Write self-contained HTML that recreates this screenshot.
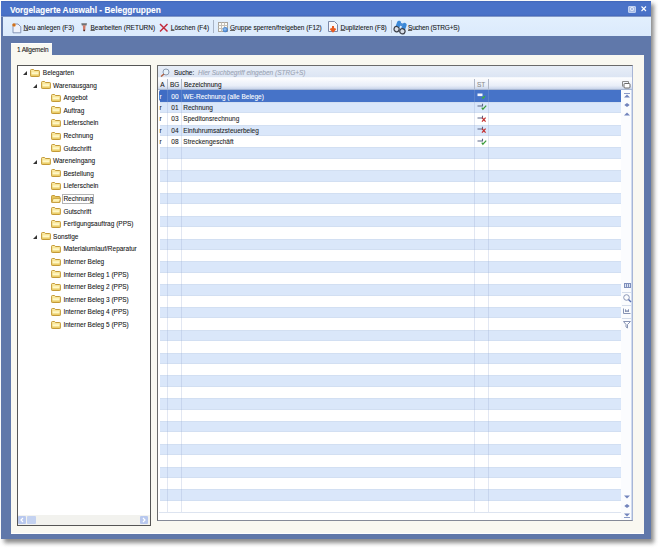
<!DOCTYPE html><html><head><meta charset="utf-8"><style>
*{margin:0;padding:0;box-sizing:border-box}
html,body{width:659px;height:548px;overflow:hidden;background:#fff;font-family:"Liberation Sans", sans-serif;}
.a{position:absolute}
.t{position:absolute;white-space:nowrap;font-size:6.5px;line-height:8px;color:#151515;-webkit-text-stroke-width:0.08px}
.f{position:absolute;width:9px;height:7px}
u{text-decoration:underline;text-decoration-color:#666;text-decoration-thickness:0.5px;text-underline-offset:0.4px}
</style></head><body>
<div class="a" style="left:4px;top:4px;width:650px;height:539px;background:#808080;filter:blur(2px);opacity:.9"></div>
<div class="a" style="left:1px;top:1px;width:650px;height:538px;background:#6078aa"></div>
<div class="a" style="left:1px;top:1px;width:650px;height:15px;background:linear-gradient(#4266b8,#4a72c8 12%,#4a72c8 88%,#4568bc)"></div>
<div class="a" style="left:1px;top:16px;width:650px;height:1px;background:#8298c8"></div>
<div class="t" style="left:10px;top:5.2px;font-size:8.4px;line-height:10px;font-weight:bold;color:#fff">Vorgelagerte Auswahl - Beleggruppen</div>
<div class="a" style="left:628px;top:5.5px;width:8px;height:7px;background:#a6bae6;border:1px solid #c0d0f0;border-radius:1px"></div>
<div class="a" style="left:630px;top:7px;width:4px;height:4px;border:1px solid #eef3fc;border-radius:1.5px"></div>
<svg class="a" style="left:640.5px;top:6px" width="6" height="6"><path d="M0.5 0.5L5 5M5 0.5L0.5 5" stroke="#fff" stroke-width="1.1"/></svg>
<div class="a" style="left:3px;top:17px;width:648px;height:19px;background:linear-gradient(#e2effd,#dbeafc)"></div>
<svg class="a" style="left:11.5px;top:22.5px" width="10" height="11"><path d="M1 1H6L8.8 3.8V9.8H1Z" fill="#eef2fb" stroke="#7a8cb0" stroke-width="0.9"/><circle cx="2" cy="2" r="1.8" fill="#e88a2a"/><circle cx="2" cy="2" r="0.7" fill="#a04010"/></svg>
<div class="t" style="left:23.5px;top:24px"><u>N</u>eu anlegen (F3)</div>
<svg class="a" style="left:81px;top:22px" width="7" height="10"><path d="M0.3 1.2H6L5.5 3.4H0.8Z" fill="#707274"/><path d="M1.8 3.2H4.6L4.2 8.6Q3.2 9.6 2.2 8.6Z" fill="#d07a66"/><path d="M2.3 7.8H4.1L3.8 9.2H2.6Z" fill="#402020"/></svg>
<div class="t" style="left:90.5px;top:24px"><u>B</u>earbeiten (RETURN)</div>
<svg class="a" style="left:159px;top:23px" width="10" height="10"><path d="M1 1L8.5 8.5M8.5 1L1 8.5" stroke="#c22a3c" stroke-width="1.45"/></svg>
<div class="t" style="left:170.8px;top:24px"><u>L</u>öschen (F4)</div>
<div class="a" style="left:213px;top:20px;width:1px;height:13px;background:#a8b4c6"></div>
<svg class="a" style="left:217px;top:22px" width="12" height="11"><defs><radialGradient id="bg1" cx="0.45" cy="0.45" r="0.6"><stop offset="0" stop-color="#9cc8f4"/><stop offset="1" stop-color="#2c6cc0"/></radialGradient></defs><rect x="1.5" y="0.5" width="9" height="9" fill="#fbfbf6" stroke="#a8a49c"/><path d="M4.5 0.5V9.5M7.5 0.5V9.5M1.5 3.5H10.5M1.5 6.5H10.5" stroke="#c4c0b8"/><circle cx="8.2" cy="7.6" r="2.6" fill="url(#bg1)"/></svg>
<div class="t" style="left:230px;top:24px"><u>G</u>ruppe sperren/freigeben (F12)</div>
<svg class="a" style="left:328px;top:21px" width="11" height="12"><path d="M0.5 0.5H6.5L9.5 3.5V10.5H0.5Z" fill="#f6f6fa" stroke="#7a88a8"/><path d="M5 5V10M2.5 7.5L5 10.2L7.5 7.5" stroke="#e85a20" stroke-width="2" fill="none"/></svg>
<div class="t" style="left:340.5px;top:24px"><u>D</u>uplizieren (F8)</div>
<div class="a" style="left:391px;top:20px;width:1px;height:13px;background:#b4bece"></div>
<svg class="a" style="left:393px;top:19.5px" width="15" height="15"><g transform="rotate(20 7.5 7.5)"><rect x="2.5" y="1.5" width="4" height="8" rx="2" fill="#3a88d8"/><rect x="8.5" y="1.5" width="4" height="8" rx="2" fill="#3a88d8"/><rect x="6" y="3" width="3" height="3" fill="#4a8ed8"/><circle cx="4.4" cy="10.4" r="2.6" fill="#d8dee8" stroke="#3a3e48" stroke-width="1.2"/><circle cx="10.6" cy="10.4" r="2.6" fill="#d8dee8" stroke="#3a3e48" stroke-width="1.2"/></g></svg>
<div class="t" style="left:408px;top:24px;letter-spacing:-0.2px"><u>S</u>uchen (STRG+S)</div>
<div class="a" style="left:11px;top:43px;width:41px;height:12px;background:#f9f8f1;border-top:1px solid #fff"></div>
<div class="t" style="left:17px;top:46px;letter-spacing:-0.2px">1 Allgemein</div>
<div class="a" style="left:11px;top:55px;width:633px;height:479px;background:#f9f8f1;border-bottom:1px solid #fff"></div>
<div class="a" style="left:17px;top:65px;width:134px;height:461px;background:#fff;border:1px solid #555"></div>
<svg class="a" style="left:23.0px;top:71.3px" width="4" height="4"><path d="M4 0V4H0Z" fill="#333"/></svg>
<svg class="f" style="left:30.3px;top:68.5px;width:10px;height:8px" width="10" height="8" viewBox="0 0 10 8"><defs><linearGradient id="fg" x1="0" y1="0" x2="0" y2="1"><stop offset="0" stop-color="#fff2b0"/><stop offset="1" stop-color="#e8c860"/></linearGradient></defs><path d="M0.6 1.2Q0.6 0.5 1.3 0.5H3.6L4.4 1.5H8.8Q9.4 1.5 9.4 2.2V6.9Q9.4 7.5 8.8 7.5H1.2Q0.6 7.5 0.6 6.9Z" fill="url(#fg)" stroke="#c49a38" stroke-width="1"/><rect x="1.6" y="3.3" width="6.8" height="2" fill="#fff8c8"/></svg>
<div class="t" style="left:42.8px;top:69.0px">Belegarten</div>
<svg class="a" style="left:33.2px;top:83.9px" width="4" height="4"><path d="M4 0V4H0Z" fill="#333"/></svg>
<svg class="f" style="left:40.5px;top:81.1px;width:10px;height:8px" width="10" height="8" viewBox="0 0 10 8"><defs><linearGradient id="fg" x1="0" y1="0" x2="0" y2="1"><stop offset="0" stop-color="#fff2b0"/><stop offset="1" stop-color="#e8c860"/></linearGradient></defs><path d="M0.6 1.2Q0.6 0.5 1.3 0.5H3.6L4.4 1.5H8.8Q9.4 1.5 9.4 2.2V6.9Q9.4 7.5 8.8 7.5H1.2Q0.6 7.5 0.6 6.9Z" fill="url(#fg)" stroke="#c49a38" stroke-width="1"/><rect x="1.6" y="3.3" width="6.8" height="2" fill="#fff8c8"/></svg>
<div class="t" style="left:53.1px;top:81.6px">Warenausgang</div>
<svg class="f" style="left:50.7px;top:93.7px;width:10px;height:8px" width="10" height="8" viewBox="0 0 10 8"><defs><linearGradient id="fg" x1="0" y1="0" x2="0" y2="1"><stop offset="0" stop-color="#fff2b0"/><stop offset="1" stop-color="#e8c860"/></linearGradient></defs><path d="M0.6 1.2Q0.6 0.5 1.3 0.5H3.6L4.4 1.5H8.8Q9.4 1.5 9.4 2.2V6.9Q9.4 7.5 8.8 7.5H1.2Q0.6 7.5 0.6 6.9Z" fill="url(#fg)" stroke="#c49a38" stroke-width="1"/><rect x="1.6" y="3.3" width="6.8" height="2" fill="#fff8c8"/></svg>
<div class="t" style="left:63.4px;top:94.2px">Angebot</div>
<svg class="f" style="left:50.7px;top:106.3px;width:10px;height:8px" width="10" height="8" viewBox="0 0 10 8"><defs><linearGradient id="fg" x1="0" y1="0" x2="0" y2="1"><stop offset="0" stop-color="#fff2b0"/><stop offset="1" stop-color="#e8c860"/></linearGradient></defs><path d="M0.6 1.2Q0.6 0.5 1.3 0.5H3.6L4.4 1.5H8.8Q9.4 1.5 9.4 2.2V6.9Q9.4 7.5 8.8 7.5H1.2Q0.6 7.5 0.6 6.9Z" fill="url(#fg)" stroke="#c49a38" stroke-width="1"/><rect x="1.6" y="3.3" width="6.8" height="2" fill="#fff8c8"/></svg>
<div class="t" style="left:63.4px;top:106.8px">Auftrag</div>
<svg class="f" style="left:50.7px;top:118.9px;width:10px;height:8px" width="10" height="8" viewBox="0 0 10 8"><defs><linearGradient id="fg" x1="0" y1="0" x2="0" y2="1"><stop offset="0" stop-color="#fff2b0"/><stop offset="1" stop-color="#e8c860"/></linearGradient></defs><path d="M0.6 1.2Q0.6 0.5 1.3 0.5H3.6L4.4 1.5H8.8Q9.4 1.5 9.4 2.2V6.9Q9.4 7.5 8.8 7.5H1.2Q0.6 7.5 0.6 6.9Z" fill="url(#fg)" stroke="#c49a38" stroke-width="1"/><rect x="1.6" y="3.3" width="6.8" height="2" fill="#fff8c8"/></svg>
<div class="t" style="left:63.4px;top:119.4px">Lieferschein</div>
<svg class="f" style="left:50.7px;top:131.5px;width:10px;height:8px" width="10" height="8" viewBox="0 0 10 8"><defs><linearGradient id="fg" x1="0" y1="0" x2="0" y2="1"><stop offset="0" stop-color="#fff2b0"/><stop offset="1" stop-color="#e8c860"/></linearGradient></defs><path d="M0.6 1.2Q0.6 0.5 1.3 0.5H3.6L4.4 1.5H8.8Q9.4 1.5 9.4 2.2V6.9Q9.4 7.5 8.8 7.5H1.2Q0.6 7.5 0.6 6.9Z" fill="url(#fg)" stroke="#c49a38" stroke-width="1"/><rect x="1.6" y="3.3" width="6.8" height="2" fill="#fff8c8"/></svg>
<div class="t" style="left:63.4px;top:132.0px">Rechnung</div>
<svg class="f" style="left:50.7px;top:144.1px;width:10px;height:8px" width="10" height="8" viewBox="0 0 10 8"><defs><linearGradient id="fg" x1="0" y1="0" x2="0" y2="1"><stop offset="0" stop-color="#fff2b0"/><stop offset="1" stop-color="#e8c860"/></linearGradient></defs><path d="M0.6 1.2Q0.6 0.5 1.3 0.5H3.6L4.4 1.5H8.8Q9.4 1.5 9.4 2.2V6.9Q9.4 7.5 8.8 7.5H1.2Q0.6 7.5 0.6 6.9Z" fill="url(#fg)" stroke="#c49a38" stroke-width="1"/><rect x="1.6" y="3.3" width="6.8" height="2" fill="#fff8c8"/></svg>
<div class="t" style="left:63.4px;top:144.6px">Gutschrift</div>
<svg class="a" style="left:33.2px;top:159.5px" width="4" height="4"><path d="M4 0V4H0Z" fill="#333"/></svg>
<svg class="f" style="left:40.5px;top:156.7px;width:10px;height:8px" width="10" height="8" viewBox="0 0 10 8"><defs><linearGradient id="fg" x1="0" y1="0" x2="0" y2="1"><stop offset="0" stop-color="#fff2b0"/><stop offset="1" stop-color="#e8c860"/></linearGradient></defs><path d="M0.6 1.2Q0.6 0.5 1.3 0.5H3.6L4.4 1.5H8.8Q9.4 1.5 9.4 2.2V6.9Q9.4 7.5 8.8 7.5H1.2Q0.6 7.5 0.6 6.9Z" fill="url(#fg)" stroke="#c49a38" stroke-width="1"/><rect x="1.6" y="3.3" width="6.8" height="2" fill="#fff8c8"/></svg>
<div class="t" style="left:53.1px;top:157.2px">Wareneingang</div>
<svg class="f" style="left:50.7px;top:169.3px;width:10px;height:8px" width="10" height="8" viewBox="0 0 10 8"><defs><linearGradient id="fg" x1="0" y1="0" x2="0" y2="1"><stop offset="0" stop-color="#fff2b0"/><stop offset="1" stop-color="#e8c860"/></linearGradient></defs><path d="M0.6 1.2Q0.6 0.5 1.3 0.5H3.6L4.4 1.5H8.8Q9.4 1.5 9.4 2.2V6.9Q9.4 7.5 8.8 7.5H1.2Q0.6 7.5 0.6 6.9Z" fill="url(#fg)" stroke="#c49a38" stroke-width="1"/><rect x="1.6" y="3.3" width="6.8" height="2" fill="#fff8c8"/></svg>
<div class="t" style="left:63.4px;top:169.8px">Bestellung</div>
<svg class="f" style="left:50.7px;top:181.9px;width:10px;height:8px" width="10" height="8" viewBox="0 0 10 8"><defs><linearGradient id="fg" x1="0" y1="0" x2="0" y2="1"><stop offset="0" stop-color="#fff2b0"/><stop offset="1" stop-color="#e8c860"/></linearGradient></defs><path d="M0.6 1.2Q0.6 0.5 1.3 0.5H3.6L4.4 1.5H8.8Q9.4 1.5 9.4 2.2V6.9Q9.4 7.5 8.8 7.5H1.2Q0.6 7.5 0.6 6.9Z" fill="url(#fg)" stroke="#c49a38" stroke-width="1"/><rect x="1.6" y="3.3" width="6.8" height="2" fill="#fff8c8"/></svg>
<div class="t" style="left:63.4px;top:182.4px">Lieferschein</div>
<svg class="f" style="left:50.7px;top:194.5px;width:10px;height:8px" width="10" height="8" viewBox="0 0 10 8"><path d="M0.6 1.2Q0.6 0.5 1.3 0.5H3.6L4.4 1.5H8.4Q9 1.5 9 2.2V6.9Q9 7.5 8.4 7.5H1.2Q0.6 7.5 0.6 6.9Z" fill="#e8c860" stroke="#c49a38" stroke-width="1"/><path d="M2.2 3.4H9.6L8.4 7.3H0.9Z" fill="#fff2b0" stroke="#c49a38" stroke-width="0.8"/></svg>
<div class="a" style="left:61.9px;top:194.3px;width:32.5px;height:9.5px;border:1px solid #b4b4b4"></div>
<div class="t" style="left:63.4px;top:195.0px">Rechnung</div>
<svg class="f" style="left:50.7px;top:207.1px;width:10px;height:8px" width="10" height="8" viewBox="0 0 10 8"><defs><linearGradient id="fg" x1="0" y1="0" x2="0" y2="1"><stop offset="0" stop-color="#fff2b0"/><stop offset="1" stop-color="#e8c860"/></linearGradient></defs><path d="M0.6 1.2Q0.6 0.5 1.3 0.5H3.6L4.4 1.5H8.8Q9.4 1.5 9.4 2.2V6.9Q9.4 7.5 8.8 7.5H1.2Q0.6 7.5 0.6 6.9Z" fill="url(#fg)" stroke="#c49a38" stroke-width="1"/><rect x="1.6" y="3.3" width="6.8" height="2" fill="#fff8c8"/></svg>
<div class="t" style="left:63.4px;top:207.6px">Gutschrift</div>
<svg class="f" style="left:50.7px;top:219.7px;width:10px;height:8px" width="10" height="8" viewBox="0 0 10 8"><defs><linearGradient id="fg" x1="0" y1="0" x2="0" y2="1"><stop offset="0" stop-color="#fff2b0"/><stop offset="1" stop-color="#e8c860"/></linearGradient></defs><path d="M0.6 1.2Q0.6 0.5 1.3 0.5H3.6L4.4 1.5H8.8Q9.4 1.5 9.4 2.2V6.9Q9.4 7.5 8.8 7.5H1.2Q0.6 7.5 0.6 6.9Z" fill="url(#fg)" stroke="#c49a38" stroke-width="1"/><rect x="1.6" y="3.3" width="6.8" height="2" fill="#fff8c8"/></svg>
<div class="t" style="left:63.4px;top:220.2px">Fertigungsauftrag (PPS)</div>
<svg class="a" style="left:33.2px;top:235.1px" width="4" height="4"><path d="M4 0V4H0Z" fill="#333"/></svg>
<svg class="f" style="left:40.5px;top:232.3px;width:10px;height:8px" width="10" height="8" viewBox="0 0 10 8"><defs><linearGradient id="fg" x1="0" y1="0" x2="0" y2="1"><stop offset="0" stop-color="#fff2b0"/><stop offset="1" stop-color="#e8c860"/></linearGradient></defs><path d="M0.6 1.2Q0.6 0.5 1.3 0.5H3.6L4.4 1.5H8.8Q9.4 1.5 9.4 2.2V6.9Q9.4 7.5 8.8 7.5H1.2Q0.6 7.5 0.6 6.9Z" fill="url(#fg)" stroke="#c49a38" stroke-width="1"/><rect x="1.6" y="3.3" width="6.8" height="2" fill="#fff8c8"/></svg>
<div class="t" style="left:53.1px;top:232.8px">Sonstige</div>
<svg class="f" style="left:50.7px;top:244.9px;width:10px;height:8px" width="10" height="8" viewBox="0 0 10 8"><defs><linearGradient id="fg" x1="0" y1="0" x2="0" y2="1"><stop offset="0" stop-color="#fff2b0"/><stop offset="1" stop-color="#e8c860"/></linearGradient></defs><path d="M0.6 1.2Q0.6 0.5 1.3 0.5H3.6L4.4 1.5H8.8Q9.4 1.5 9.4 2.2V6.9Q9.4 7.5 8.8 7.5H1.2Q0.6 7.5 0.6 6.9Z" fill="url(#fg)" stroke="#c49a38" stroke-width="1"/><rect x="1.6" y="3.3" width="6.8" height="2" fill="#fff8c8"/></svg>
<div class="t" style="left:63.4px;top:245.4px">Materialumlauf/Reparatur</div>
<svg class="f" style="left:50.7px;top:257.5px;width:10px;height:8px" width="10" height="8" viewBox="0 0 10 8"><defs><linearGradient id="fg" x1="0" y1="0" x2="0" y2="1"><stop offset="0" stop-color="#fff2b0"/><stop offset="1" stop-color="#e8c860"/></linearGradient></defs><path d="M0.6 1.2Q0.6 0.5 1.3 0.5H3.6L4.4 1.5H8.8Q9.4 1.5 9.4 2.2V6.9Q9.4 7.5 8.8 7.5H1.2Q0.6 7.5 0.6 6.9Z" fill="url(#fg)" stroke="#c49a38" stroke-width="1"/><rect x="1.6" y="3.3" width="6.8" height="2" fill="#fff8c8"/></svg>
<div class="t" style="left:63.4px;top:258.0px">Interner Beleg</div>
<svg class="f" style="left:50.7px;top:270.1px;width:10px;height:8px" width="10" height="8" viewBox="0 0 10 8"><defs><linearGradient id="fg" x1="0" y1="0" x2="0" y2="1"><stop offset="0" stop-color="#fff2b0"/><stop offset="1" stop-color="#e8c860"/></linearGradient></defs><path d="M0.6 1.2Q0.6 0.5 1.3 0.5H3.6L4.4 1.5H8.8Q9.4 1.5 9.4 2.2V6.9Q9.4 7.5 8.8 7.5H1.2Q0.6 7.5 0.6 6.9Z" fill="url(#fg)" stroke="#c49a38" stroke-width="1"/><rect x="1.6" y="3.3" width="6.8" height="2" fill="#fff8c8"/></svg>
<div class="t" style="left:63.4px;top:270.6px">Interner Beleg 1 (PPS)</div>
<svg class="f" style="left:50.7px;top:282.7px;width:10px;height:8px" width="10" height="8" viewBox="0 0 10 8"><defs><linearGradient id="fg" x1="0" y1="0" x2="0" y2="1"><stop offset="0" stop-color="#fff2b0"/><stop offset="1" stop-color="#e8c860"/></linearGradient></defs><path d="M0.6 1.2Q0.6 0.5 1.3 0.5H3.6L4.4 1.5H8.8Q9.4 1.5 9.4 2.2V6.9Q9.4 7.5 8.8 7.5H1.2Q0.6 7.5 0.6 6.9Z" fill="url(#fg)" stroke="#c49a38" stroke-width="1"/><rect x="1.6" y="3.3" width="6.8" height="2" fill="#fff8c8"/></svg>
<div class="t" style="left:63.4px;top:283.2px">Interner Beleg 2 (PPS)</div>
<svg class="f" style="left:50.7px;top:295.3px;width:10px;height:8px" width="10" height="8" viewBox="0 0 10 8"><defs><linearGradient id="fg" x1="0" y1="0" x2="0" y2="1"><stop offset="0" stop-color="#fff2b0"/><stop offset="1" stop-color="#e8c860"/></linearGradient></defs><path d="M0.6 1.2Q0.6 0.5 1.3 0.5H3.6L4.4 1.5H8.8Q9.4 1.5 9.4 2.2V6.9Q9.4 7.5 8.8 7.5H1.2Q0.6 7.5 0.6 6.9Z" fill="url(#fg)" stroke="#c49a38" stroke-width="1"/><rect x="1.6" y="3.3" width="6.8" height="2" fill="#fff8c8"/></svg>
<div class="t" style="left:63.4px;top:295.8px">Interner Beleg 3 (PPS)</div>
<svg class="f" style="left:50.7px;top:307.9px;width:10px;height:8px" width="10" height="8" viewBox="0 0 10 8"><defs><linearGradient id="fg" x1="0" y1="0" x2="0" y2="1"><stop offset="0" stop-color="#fff2b0"/><stop offset="1" stop-color="#e8c860"/></linearGradient></defs><path d="M0.6 1.2Q0.6 0.5 1.3 0.5H3.6L4.4 1.5H8.8Q9.4 1.5 9.4 2.2V6.9Q9.4 7.5 8.8 7.5H1.2Q0.6 7.5 0.6 6.9Z" fill="url(#fg)" stroke="#c49a38" stroke-width="1"/><rect x="1.6" y="3.3" width="6.8" height="2" fill="#fff8c8"/></svg>
<div class="t" style="left:63.4px;top:308.4px">Interner Beleg 4 (PPS)</div>
<svg class="f" style="left:50.7px;top:320.5px;width:10px;height:8px" width="10" height="8" viewBox="0 0 10 8"><defs><linearGradient id="fg" x1="0" y1="0" x2="0" y2="1"><stop offset="0" stop-color="#fff2b0"/><stop offset="1" stop-color="#e8c860"/></linearGradient></defs><path d="M0.6 1.2Q0.6 0.5 1.3 0.5H3.6L4.4 1.5H8.8Q9.4 1.5 9.4 2.2V6.9Q9.4 7.5 8.8 7.5H1.2Q0.6 7.5 0.6 6.9Z" fill="url(#fg)" stroke="#c49a38" stroke-width="1"/><rect x="1.6" y="3.3" width="6.8" height="2" fill="#fff8c8"/></svg>
<div class="t" style="left:63.4px;top:321.0px">Interner Beleg 5 (PPS)</div>
<div class="a" style="left:18px;top:515px;width:132px;height:10px;background:#f2f2ee"></div>
<div class="a" style="left:18px;top:516px;width:8px;height:8px;background:#b8c8ee;border-radius:1px"></div>
<svg class="a" style="left:19px;top:517px" width="6" height="6"><path d="M4 1L2 3L4 5" stroke="#fff" stroke-width="1.2" fill="none"/></svg>
<div class="a" style="left:27px;top:516px;width:9px;height:8px;background:#c4d2f0;border-radius:1px"></div>
<div class="a" style="left:140px;top:516px;width:8px;height:8px;background:#b8c8ee;border-radius:1px"></div>
<svg class="a" style="left:141px;top:517px" width="6" height="6"><path d="M2 1L4 3L2 5" stroke="#fff" stroke-width="1.2" fill="none"/></svg>
<div class="a" style="left:157px;top:65px;width:476px;height:456px;background:#fff;border:1px solid #6a6a6a;border-right-color:#a8b6d6;border-bottom-color:#858a98"></div>
<div class="a" style="left:158px;top:66px;width:474px;height:12px;background:linear-gradient(#e8eef8,#dce5f3);border-bottom:1px solid #f4f7fc"></div>
<svg class="a" style="left:160px;top:68px" width="11" height="9"><circle cx="6" cy="4" r="3" fill="#e6f2fa" stroke="#8a9ab0"/><path d="M4 6L1 8.5" stroke="#b06040" stroke-width="1.5"/></svg>
<div class="t" style="left:174px;top:68.5px">Suche:</div>
<div class="t" style="left:198px;top:68.5px;font-style:italic;color:#9aa4b4">Hier Suchbegriff eingeben (STRG+S)</div>
<div class="a" style="left:158px;top:78px;width:474px;height:12px;background:linear-gradient(#fdfdfe,#e8eef8 70%,#c8d4ea);border-bottom:1px solid #a8b8d4"></div>
<div class="a" style="left:166.5px;top:79px;width:1px;height:10px;background:#b0b8c8"></div>
<div class="a" style="left:181px;top:79px;width:1px;height:10px;background:#b0b8c8"></div>
<div class="a" style="left:473.5px;top:79px;width:1px;height:10px;background:#b0b8c8"></div>
<div class="a" style="left:488px;top:79px;width:1px;height:10px;background:#b0b8c8"></div>
<div class="t" style="left:160.3px;top:80.9px">A</div>
<div class="t" style="left:170px;top:80.9px">BG</div>
<div class="t" style="left:184px;top:80.9px">Bezeichnung</div>
<div class="t" style="left:477px;top:80.9px;color:#8a8a8a">ST</div>
<svg class="a" style="left:622px;top:81px" width="9" height="8"><path d="M0.5 5.5V0.5H6.5V2" fill="none" stroke="#8a8a8a"/><rect x="2" y="2.5" width="6" height="4.5" rx="1" fill="#fff" stroke="#6a6a6a"/></svg>
<div class="a" style="left:160px;top:90.4px;width:461px;height:11.4px;background:#4673c8"></div>
<div class="a" style="left:158.5px;top:90.4px;width:8px;height:11px;background:#3f6cc4;border-radius:2px"></div>
<div class="t" style="left:159.5px;top:92.6px;color:#ffffff">r</div>
<div class="t" style="left:171.3px;top:92.6px;color:#ffffff">00</div>
<div class="t" style="left:183.3px;top:92.6px;color:#ffffff">WE-Rechnung (alle Belege)</div>
<svg class="a" style="left:476.5px;top:92.0px" width="10" height="8"><rect x="0.5" y="1.5" width="5" height="2.6" fill="#f4f7ff"/><path d="M5.2 5L6 6.2L8 4" stroke="#3cb040" stroke-width="1.2" fill="none"/></svg>
<div class="a" style="left:160px;top:101.8px;width:461px;height:11.4px;background:#dae7fa;border-top:1px solid #d2dff2;border-bottom:1px solid #d2dff2"></div>
<div class="t" style="left:159.5px;top:104.0px;color:#1e1e1e">r</div>
<div class="t" style="left:171.3px;top:104.0px;color:#1e1e1e">01</div>
<div class="t" style="left:183.3px;top:104.0px;color:#1e1e1e">Rechnung</div>
<svg class="a" style="left:476.5px;top:103.4px" width="10" height="8"><path d="M0.5 3H5.5V0.8" stroke="#5a6686" stroke-width="1.1" fill="none"/><path d="M4.8 4.6L5.9 6.2L9.2 2.6" stroke="#3c9c3c" stroke-width="1.25" fill="none"/></svg>
<div class="a" style="left:160px;top:113.2px;width:461px;height:11.4px;background:#ffffff"></div>
<div class="t" style="left:159.5px;top:115.4px;color:#1e1e1e">r</div>
<div class="t" style="left:171.3px;top:115.4px;color:#1e1e1e">03</div>
<div class="t" style="left:183.3px;top:115.4px;color:#1e1e1e">Speditonsrechnung</div>
<svg class="a" style="left:476.5px;top:114.8px" width="10" height="8"><path d="M0.5 3H5.5V0.8" stroke="#5a6686" stroke-width="1.1" fill="none"/><path d="M5 2.6L8.6 6.6M8.6 2.6L5 6.6" stroke="#c43030" stroke-width="1.25"/></svg>
<div class="a" style="left:160px;top:124.6px;width:461px;height:11.4px;background:#dae7fa;border-top:1px solid #d2dff2;border-bottom:1px solid #d2dff2"></div>
<div class="t" style="left:159.5px;top:126.8px;color:#1e1e1e">r</div>
<div class="t" style="left:171.3px;top:126.8px;color:#1e1e1e">04</div>
<div class="t" style="left:183.3px;top:126.8px;color:#1e1e1e">Einfuhrumsatzsteuerbeleg</div>
<svg class="a" style="left:476.5px;top:126.2px" width="10" height="8"><path d="M0.5 3H5.5V0.8" stroke="#5a6686" stroke-width="1.1" fill="none"/><path d="M5 2.6L8.6 6.6M8.6 2.6L5 6.6" stroke="#c43030" stroke-width="1.25"/></svg>
<div class="a" style="left:160px;top:136.0px;width:461px;height:11.4px;background:#ffffff"></div>
<div class="t" style="left:159.5px;top:138.2px;color:#1e1e1e">r</div>
<div class="t" style="left:171.3px;top:138.2px;color:#1e1e1e">08</div>
<div class="t" style="left:183.3px;top:138.2px;color:#1e1e1e">Streckengeschäft</div>
<svg class="a" style="left:476.5px;top:137.6px" width="10" height="8"><path d="M0.5 3H5.5V0.8" stroke="#5a6686" stroke-width="1.1" fill="none"/><path d="M4.8 4.6L5.9 6.2L9.2 2.6" stroke="#3c9c3c" stroke-width="1.25" fill="none"/></svg>
<div class="a" style="left:160px;top:147.4px;width:461px;height:11.4px;background:#dae7fa;border-top:1px solid #d2dff2;border-bottom:1px solid #d2dff2"></div>
<div class="a" style="left:160px;top:158.8px;width:461px;height:11.4px;background:#ffffff"></div>
<div class="a" style="left:160px;top:170.2px;width:461px;height:11.4px;background:#dae7fa;border-top:1px solid #d2dff2;border-bottom:1px solid #d2dff2"></div>
<div class="a" style="left:160px;top:181.6px;width:461px;height:11.4px;background:#ffffff"></div>
<div class="a" style="left:160px;top:193.0px;width:461px;height:11.4px;background:#dae7fa;border-top:1px solid #d2dff2;border-bottom:1px solid #d2dff2"></div>
<div class="a" style="left:160px;top:204.4px;width:461px;height:11.4px;background:#ffffff"></div>
<div class="a" style="left:160px;top:215.8px;width:461px;height:11.4px;background:#dae7fa;border-top:1px solid #d2dff2;border-bottom:1px solid #d2dff2"></div>
<div class="a" style="left:160px;top:227.2px;width:461px;height:11.4px;background:#ffffff"></div>
<div class="a" style="left:160px;top:238.6px;width:461px;height:11.4px;background:#dae7fa;border-top:1px solid #d2dff2;border-bottom:1px solid #d2dff2"></div>
<div class="a" style="left:160px;top:250.0px;width:461px;height:11.4px;background:#ffffff"></div>
<div class="a" style="left:160px;top:261.4px;width:461px;height:11.4px;background:#dae7fa;border-top:1px solid #d2dff2;border-bottom:1px solid #d2dff2"></div>
<div class="a" style="left:160px;top:272.8px;width:461px;height:11.4px;background:#ffffff"></div>
<div class="a" style="left:160px;top:284.2px;width:461px;height:11.4px;background:#dae7fa;border-top:1px solid #d2dff2;border-bottom:1px solid #d2dff2"></div>
<div class="a" style="left:160px;top:295.6px;width:461px;height:11.4px;background:#ffffff"></div>
<div class="a" style="left:160px;top:307.0px;width:461px;height:11.4px;background:#dae7fa;border-top:1px solid #d2dff2;border-bottom:1px solid #d2dff2"></div>
<div class="a" style="left:160px;top:318.4px;width:461px;height:11.4px;background:#ffffff"></div>
<div class="a" style="left:160px;top:329.8px;width:461px;height:11.4px;background:#dae7fa;border-top:1px solid #d2dff2;border-bottom:1px solid #d2dff2"></div>
<div class="a" style="left:160px;top:341.2px;width:461px;height:11.4px;background:#ffffff"></div>
<div class="a" style="left:160px;top:352.6px;width:461px;height:11.4px;background:#dae7fa;border-top:1px solid #d2dff2;border-bottom:1px solid #d2dff2"></div>
<div class="a" style="left:160px;top:364.0px;width:461px;height:11.4px;background:#ffffff"></div>
<div class="a" style="left:160px;top:375.4px;width:461px;height:11.4px;background:#dae7fa;border-top:1px solid #d2dff2;border-bottom:1px solid #d2dff2"></div>
<div class="a" style="left:160px;top:386.8px;width:461px;height:11.4px;background:#ffffff"></div>
<div class="a" style="left:160px;top:398.2px;width:461px;height:11.4px;background:#dae7fa;border-top:1px solid #d2dff2;border-bottom:1px solid #d2dff2"></div>
<div class="a" style="left:160px;top:409.6px;width:461px;height:11.4px;background:#ffffff"></div>
<div class="a" style="left:160px;top:421.0px;width:461px;height:11.4px;background:#dae7fa;border-top:1px solid #d2dff2;border-bottom:1px solid #d2dff2"></div>
<div class="a" style="left:160px;top:432.4px;width:461px;height:11.4px;background:#ffffff"></div>
<div class="a" style="left:160px;top:443.8px;width:461px;height:11.4px;background:#dae7fa;border-top:1px solid #d2dff2;border-bottom:1px solid #d2dff2"></div>
<div class="a" style="left:160px;top:455.2px;width:461px;height:11.4px;background:#ffffff"></div>
<div class="a" style="left:160px;top:466.6px;width:461px;height:11.4px;background:#dae7fa;border-top:1px solid #d2dff2;border-bottom:1px solid #d2dff2"></div>
<div class="a" style="left:160px;top:478.0px;width:461px;height:11.4px;background:#ffffff"></div>
<div class="a" style="left:160px;top:489.4px;width:461px;height:11.4px;background:#dae7fa;border-top:1px solid #d2dff2;border-bottom:1px solid #d2dff2"></div>
<div class="a" style="left:160px;top:500.8px;width:461px;height:11.4px;background:#ffffff"></div>
<div class="a" style="left:167px;top:90px;width:1px;height:422px;background:rgba(150,170,210,.28)"></div>
<div class="a" style="left:181px;top:90px;width:1px;height:422px;background:rgba(150,170,210,.28)"></div>
<div class="a" style="left:473.5px;top:90px;width:1px;height:422px;background:rgba(150,170,210,.28)"></div>
<div class="a" style="left:488px;top:90px;width:1px;height:422px;background:rgba(150,170,210,.28)"></div>
<div class="a" style="left:159px;top:512px;width:462px;height:1px;background:#dde4f0"></div>
<div class="a" style="left:621px;top:90px;width:11px;height:430px;background:#fbfcfe;border-right:1.5px solid #d0dcf0"></div>
<div class="a" style="left:624px;top:92.5px;width:6px;height:1px;background:#8a9ac8"></div>
<svg class="a" style="left:624px;top:94px" width="6" height="4"><path d="M0 3.5L3 0.5L6 3.5Z" fill="#7284bc"/></svg>
<svg class="a" style="left:624px;top:102.8px" width="6" height="4"><path d="M0.3 2L3 0L5.7 2L3 4Z" fill="#7284bc"/></svg>
<svg class="a" style="left:624px;top:112px" width="6" height="4"><path d="M0 3.5L3 0.5L6 3.5Z" fill="#7284bc"/></svg>
<svg class="a" style="left:624px;top:495.3px" width="6" height="4"><path d="M0 0.5L3 3.5L6 0.5Z" fill="#7284bc"/></svg>
<svg class="a" style="left:624px;top:504.2px" width="6" height="4"><path d="M0.3 2L3 0L5.7 2L3 4Z" fill="#7284bc"/></svg>
<svg class="a" style="left:624px;top:512.8px" width="6" height="4"><path d="M0 0.5L3 3.5L6 0.5Z" fill="#7284bc"/></svg>
<div class="a" style="left:624px;top:517px;width:6px;height:1px;background:#8a9ac8"></div>
<svg class="a" style="left:623.5px;top:283px" width="7" height="5"><rect x="0.5" y="0.5" width="6" height="4" fill="#dfe6f4" stroke="#8090bc"/><path d="M2.5 0.5V4.5M4.5 0.5V4.5" stroke="#8090bc"/></svg>
<div class="a" style="left:622px;top:291.5px;width:9px;height:1px;background:#d4dcea"></div>
<svg class="a" style="left:623px;top:294px" width="9" height="9"><circle cx="3.5" cy="3.5" r="2.8" fill="none" stroke="#8894b4"/><path d="M5.5 5.5L8 8" stroke="#5a70b0" stroke-width="1.4"/></svg>
<div class="a" style="left:622px;top:304.5px;width:9px;height:1px;background:#d4dcea"></div>
<svg class="a" style="left:623px;top:308px" width="8" height="7"><path d="M0.5 0.5V5.5H7.5M2.5 4V1.5L4 4L5.5 1.5V4" stroke="#8894b4" fill="none"/></svg>
<div class="a" style="left:622px;top:318px;width:9px;height:1px;background:#d4dcea"></div>
<svg class="a" style="left:623px;top:321px" width="8" height="8"><path d="M0.5 0.5H7.5L4.5 3.5V7L3 6V3.5Z" fill="none" stroke="#8894b4"/></svg>
</body></html>
